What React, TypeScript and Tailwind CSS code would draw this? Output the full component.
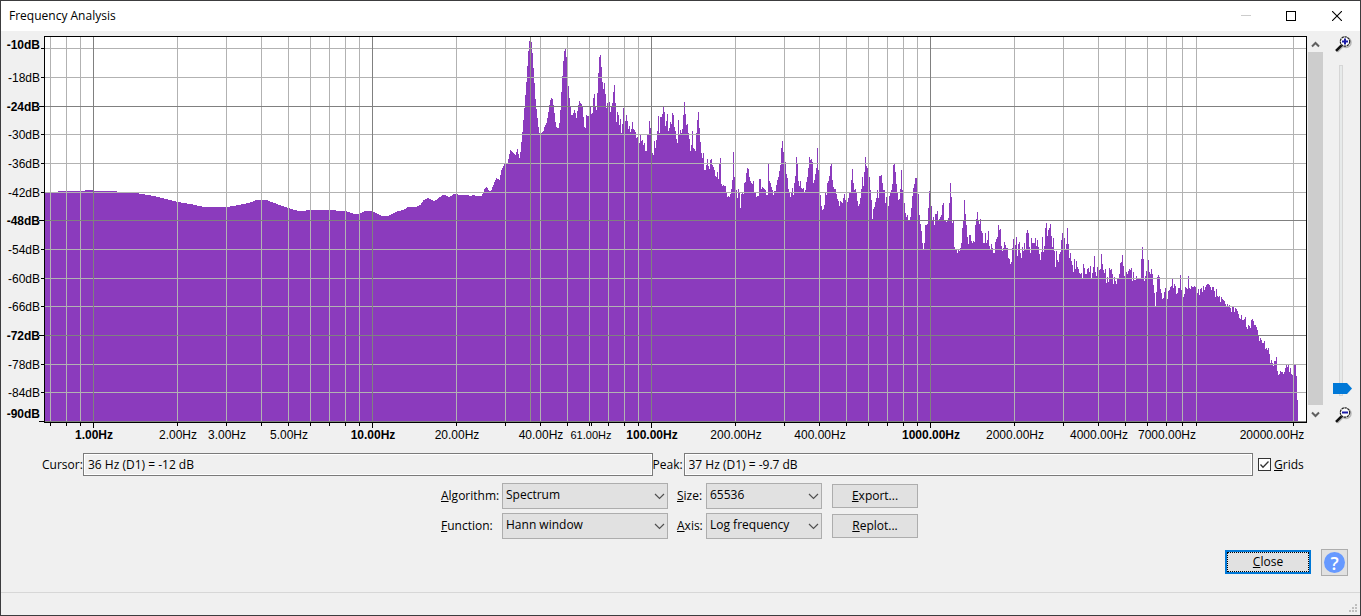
import React, { useState } from 'react';

const GRID = '#b2b2b2';
const GRID_MAJOR = '#808080';
const SPECTRUM = '#8b3bbd';

// plot frame, in chart units
const LEFT = 44;
const RIGHT = 1306;
const TOP = 36;
const BOTTOM = 422;

const dbTicks = [
  { label: '-10dB', y: 48, labelY: 49, bold: true, major: false },
  { label: '-18dB', y: 77, labelY: 82, bold: false, major: false },
  { label: '-24dB', y: 106, labelY: 111, bold: true, major: true },
  { label: '-30dB', y: 134, labelY: 139, bold: false, major: false },
  { label: '-36dB', y: 163, labelY: 168, bold: false, major: false },
  { label: '-42dB', y: 192, labelY: 197, bold: false, major: false },
  { label: '-48dB', y: 220, labelY: 225, bold: true, major: true },
  { label: '-54dB', y: 249, labelY: 254, bold: false, major: false },
  { label: '-60dB', y: 278, labelY: 283, bold: false, major: false },
  { label: '-66dB', y: 306, labelY: 311, bold: false, major: false },
  { label: '-72dB', y: 335, labelY: 340, bold: true, major: true },
  { label: '-78dB', y: 364, labelY: 369, bold: false, major: false },
  { label: '-84dB', y: 392, labelY: 397, bold: false, major: false },
  { label: '-90dB', y: 421, labelY: 418, bold: true, major: true },
];

const minorX = [
  50, 66, 80, 177, 226, 261, 288, 310, 329, 345, 359, 456, 505, 540, 567, 589, 608, 624, 638,
  735, 784, 819, 846, 868, 887, 903, 917, 1014, 1063, 1098, 1125, 1147, 1166, 1182, 1196, 1293,
];
const majorX = [93, 372, 651, 930];

const hzLabels = [
  { text: '1.00Hz', x: 94, bold: true },
  { text: '2.00Hz', x: 178 },
  { text: '3.00Hz', x: 227 },
  { text: '5.00Hz', x: 289 },
  { text: '10.00Hz', x: 373, bold: true },
  { text: '20.00Hz', x: 457 },
  { text: '40.00Hz', x: 541 },
  { text: '61.00Hz', x: 591, small: true },
  { text: '100.00Hz', x: 652, bold: true },
  { text: '200.00Hz', x: 736 },
  { text: '400.00Hz', x: 820 },
  { text: '1000.00Hz', x: 931, bold: true },
  { text: '2000.00Hz', x: 1015 },
  { text: '4000.00Hz', x: 1099 },
  { text: '7000.00Hz', x: 1167 },
  { text: '20000.00Hz', x: 1272 },
];

// low end is smooth: [x, level] knots, interpolated
const lowKnots = [
  [45, 192], [57, 192], [58, 191], [84, 191], [85, 190], [92, 190], [93, 191], [116, 191], [118, 192], [134, 192],
  [135, 193], [148, 195], [158, 197], [165, 199], [178, 202], [190, 204], [204, 207], [225, 207], [233, 206],
  [243, 204], [251, 202], [256, 200], [266, 200], [274, 203], [282, 206], [288, 208], [298, 211], [304, 211],
  [306, 210], [335, 210], [336, 211], [345, 211], [354, 214], [358, 214], [364, 211], [372, 211], [376, 213],
  [382, 216], [388, 216], [393, 213], [397, 211], [403, 210], [407, 207], [415, 207], [420, 205], [423, 200],
  [427, 198], [430, 199], [434, 201], [437, 199], [442, 195], [445, 195], [449, 197], [453, 194], [456, 194],
  [459, 195], [468, 195], [470, 196], [473, 195], [477, 196], [481, 196], [483, 192], [484, 189], [486, 187],
  [489, 191], [491, 190], [494, 182], [496, 178], [499, 180], [501, 170], [504, 164], [507, 163], [509, 154],
  [510, 150], [512, 152], [515, 155], [517, 149], [519, 158], [520, 152], [521, 142], [522, 132], [523, 120],
  [524, 108], [525, 95], [526, 82], [527, 66], [528, 51], [529, 41], [531, 42], [532, 53], [533, 68], [534, 83],
  [535, 99], [536, 109], [537, 118], [538, 127], [539, 133], [541, 133], [543, 131], [544, 127], [546, 123],
  [547, 118], [548, 112], [549, 105], [550, 100], [551, 98], [552, 99], [553, 105], [554, 113], [555, 122],
  [556, 127], [558, 128], [559, 123], [560, 110], [561, 92], [562, 76], [563, 61], [564, 51], [565, 49],
  [566, 57], [567, 73], [568, 86], [569, 98], [570, 106], [571, 115], [572, 115], [574, 110], [575, 113],
  [576, 118], [577, 111], [578, 105], [579, 101], [580, 103], [581, 104], [582, 107], [583, 117], [584, 127],
  [585, 128], [586, 115], [588, 116], [589, 107], [590, 107], [591, 114], [592, 113], [593, 98], [594, 94],
  [595, 107], [596, 110], [597, 93], [598, 73], [599, 57],
];

// from x = 600 on there is one level per column
const midLevels = [
  55, 67, 82, 89, 83, 94, 108, 103, 107, 102, 112, 107, 103, 92, 85, 103, 122, 112, 115, 125,
  119, 133, 124, 108, 121, 121, 115, 121, 129, 126, 132, 129, 122, 129, 130, 132, 138, 137, 137, 143,
  135, 141, 140, 145, 143, 151, 151, 135, 134, 121, 128, 134, 153, 155, 141, 148, 140, 131, 116, 133,
  117, 117, 114, 107, 112, 126, 121, 114, 131, 128, 122, 124, 113, 115, 127, 131, 139, 143, 120, 134,
  130, 133, 129, 115, 102, 114, 125, 124, 133, 139, 151, 145, 131, 148, 149, 151, 133, 120, 112, 128,
];

const upperLevels = [
  142, 153, 158, 153, 170, 170, 165, 159, 166, 169, 160, 159, 165, 167, 170, 176, 177, 172, 179, 163,
  158, 184, 186, 185, 186, 186, 193, 197, 196, 197, 194, 189, 180, 152, 177, 192, 190, 198, 189, 193,
  208, 194, 193, 194, 183, 182, 173, 168, 169, 177, 181, 183, 184, 181, 192, 193, 197, 196, 196, 179,
  179, 189, 187, 188, 189, 190, 195, 195, 164, 181, 183, 187, 190, 195, 191, 191, 185, 180, 177, 171,
  165, 148, 141, 152, 163, 162, 174, 178, 189, 193, 197, 193, 188, 195, 183, 176, 157, 163, 181, 186,
  181, 188, 189, 188, 192, 190, 182, 177, 168, 157, 160, 159, 162, 183, 180, 174, 168, 148, 170, 190,
  195, 206, 210, 209, 205, 193, 195, 183, 181, 176, 166, 164, 180, 187, 189, 189, 194, 199, 201, 206,
  201, 202, 203, 198, 194, 200, 200, 202, 198, 193, 193, 180, 169, 183, 190, 189, 193, 201, 206, 204,
  198, 189, 177, 186, 172, 157, 166, 168, 177, 177, 190, 200, 219, 209, 207, 202, 198, 190, 198, 176,
  176, 175, 183, 190, 190, 203, 197, 200, 206, 196, 193, 190, 184, 165, 164, 172, 184, 192, 200, 199,
  189, 170, 190, 200, 203, 213, 217, 215, 220, 220, 217, 208, 196, 188, 184, 178, 178, 190, 194, 215,
  224, 231, 243, 249, 243, 225, 225, 224, 208, 191, 200, 206, 220, 217, 225, 214, 214, 211, 220, 219,
  217, 215, 205, 203, 220, 220, 222, 220, 218, 203, 183, 197, 223, 221, 247, 249, 249, 253, 250, 251,
  248, 243, 228, 220, 200, 214, 225, 237, 244, 235, 235, 241, 243, 241, 242, 225, 219, 212, 220, 224,
];

const trebleLevels = [
  219, 231, 233, 243, 243, 233, 243, 240, 231, 246, 249, 244, 248, 253, 253, 242, 239, 237, 225, 230,
  229, 246, 251, 248, 242, 245, 248, 248, 258, 259, 264, 262, 248, 239, 245, 245, 237, 256, 244, 242,
  253, 258, 247, 251, 243, 249, 233, 230, 233, 247, 253, 238, 243, 243, 243, 238, 246, 240, 247, 254,
  260, 252, 237, 252, 246, 228, 223, 236, 230, 228, 224, 236, 247, 238, 251, 267, 251, 260, 262, 254,
  252, 240, 233, 238, 238, 249, 244, 228, 244, 258, 253, 261, 265, 272, 259, 269, 261, 267, 269, 273,
  274, 273, 278, 264, 268, 274, 274, 269, 268, 272, 266, 278, 273, 267, 256, 272, 276, 267, 270, 270,
  269, 254, 264, 270, 273, 269, 283, 277, 282, 268, 270, 269, 274, 284, 277, 281, 284, 279, 278, 274,
  263, 262, 255, 266, 276, 276, 272, 274, 271, 269, 270, 268, 281, 272, 280, 280, 276, 279, 278, 278,
  278, 259, 247, 259, 281, 276, 271, 271, 260, 272, 274, 269, 274, 285, 293, 306, 292, 277, 275, 277,
  289, 293, 299, 298, 292, 288, 292, 299, 291, 290, 287, 286, 279, 288, 284, 286, 294, 293, 288, 288,
  275, 290, 297, 297, 294, 287, 288, 289, 276, 288, 289, 286, 287, 287, 286, 287, 288, 293, 289, 295,
  289, 288, 292, 286, 290, 287, 285, 284, 284, 285, 287, 290, 287, 287, 291, 297, 289, 296, 297, 296,
  302, 297, 299, 300, 301, 304, 306, 304, 306, 305, 308, 312, 307, 307, 312, 308, 309, 311, 314, 318,
  319, 315, 320, 320, 319, 317, 327, 329, 325, 326, 328, 320, 319, 321, 325, 325, 327, 330, 336, 341,
  338, 340, 343, 343, 341, 349, 348, 350, 348, 354, 363, 360, 363, 366, 361, 361, 357, 371, 375, 374,
  371, 372, 372, 374, 372, 368, 365, 367, 365, 372, 368, 374, 375, 374, 365, 365, 376, 400,
];

function buildSpectrumPath() {
  const columns: number[][] = [];
  for (let i = 0; i < lowKnots.length - 1; i++) {
    const [x0, y0] = lowKnots[i];
    const [x1, y1] = lowKnots[i + 1];
    for (let x = x0; x < x1; x++) {
      columns.push([x, Math.round(y0 + ((y1 - y0) * (x - x0)) / (x1 - x0))]);
    }
  }
  columns.push(lowKnots[lowKnots.length - 1]);
  [...midLevels, ...upperLevels, ...trebleLevels].forEach((y, i) => {
    columns.push([600 + i, y]);
  });
  const last = columns[columns.length - 1][0];
  return `M45 ${BOTTOM}` + columns.map(([x, y]) => `L${x} ${y}H${x + 1}`).join('') + `L${last + 1} ${BOTTOM}Z`;
}

const spectrumPath = buildSpectrumPath();

const SpectrumChart: React.FC<{ grids: boolean }> = ({ grids }) => (
  <svg
    viewBox="1 31 1307 414"
    className="block w-full font-['Liberation_Sans',Arial,sans-serif] text-[12px]"
    role="img"
    aria-label="Frequency spectrum"
  >
    <g shapeRendering="crispEdges">
      <rect x={LEFT} y={TOP} width={RIGHT - LEFT + 1} height={BOTTOM - TOP + 1} fill="#000" />
      <rect x={LEFT + 1} y={TOP + 1} width={RIGHT - LEFT - 1} height={BOTTOM - TOP - 1} fill="#fff" />
      <path d={spectrumPath} fill={SPECTRUM} />
      {grids && (
        <>
          {minorX.map(x => (
            <rect key={x} x={x} y={37} width={1} height={385} fill={GRID} />
          ))}
          {dbTicks.map(t => (
            <rect key={t.label} x={45} y={t.y} width={1261} height={1} fill={t.major ? GRID_MAJOR : GRID} />
          ))}
          {majorX.map(x => (
            <rect key={x} x={x} y={37} width={1} height={385} fill={GRID_MAJOR} />
          ))}
        </>
      )}
      {/* cursor position */}
      <rect x={530} y={37} width={1} height={385} fill="#8e8e88" />
      <rect x={LEFT} y={BOTTOM} width={RIGHT - LEFT + 1} height={1} fill="#000" />
      {dbTicks.map(t => (
        <rect key={t.label} x={t.major ? 39 : 41} y={t.y} width={t.major ? 5 : 3} height={1} fill="#000" />
      ))}
      {[...minorX, 591].map(x => (
        <rect key={x} x={x} y={423} width={1} height={3} fill="#000" />
      ))}
      {majorX.map(x => (
        <rect key={x} x={x} y={423} width={1} height={5} fill="#000" />
      ))}
    </g>
    {dbTicks.map(t => (
      <text key={t.label} x={40} y={t.labelY} textAnchor="end" fontWeight={t.bold ? 700 : 400}>
        {t.label}
      </text>
    ))}
    {hzLabels.map(l => (
      <text
        key={l.text}
        x={l.x}
        y={439}
        textAnchor="middle"
        fontWeight={l.bold ? 700 : 400}
        className={l.small ? 'text-[11px]' : ''}
      >
        {l.text}
      </text>
    ))}
  </svg>
);

const Magnifier: React.FC<{ plus?: boolean }> = ({ plus }) => (
  <svg className="ml-1" width="17" height="17" viewBox="0 0 17 17" fill="none">
    <path d="M2 15.5 7 10.5" stroke="#b5b5b5" strokeWidth="3" />
    <circle cx="11" cy="6.5" r="5" stroke="#b5b5b5" strokeWidth="1.5" />
    <circle cx="10" cy="5.5" r="4.7" fill="#fff" stroke="#222" strokeWidth="1.2" strokeDasharray="2.4 0.6" />
    <path d="M1 14.8 6.5 9.3" stroke="#111" strokeWidth="2.4" />
    <path d={plus ? 'M7 5.5h6M10 2.5v6' : 'M7 5.5h6'} stroke="#1a1aa6" strokeWidth="2" />
  </svg>
);

const ScrollArrow: React.FC<{ down?: boolean }> = ({ down }) => (
  <svg width="9" height="7" viewBox="0 0 9 7" fill="none">
    <path d={down ? 'M1 1.5 4.5 5 8 1.5' : 'M1 5.5 4.5 2 8 5.5'} stroke="#606060" strokeWidth="2" />
  </svg>
);

interface DropDownProps {
  id: string;
  options: string[];
  className: string;
}

const DropDown: React.FC<DropDownProps> = ({ id, options, className }) => (
  <div className={`relative ${className}`}>
    <select
      id={id}
      className="block h-[26px] w-full appearance-none border border-[#adadad] bg-[#e1e1e1] pb-[2px] pl-[3px] pr-5 leading-4 outline-none"
    >
      {options.map(o => (
        <option key={o}>{o}</option>
      ))}
    </select>
    <svg
      className="pointer-events-none absolute right-[3px] top-[10px]"
      width="11"
      height="7"
      viewBox="0 0 11 7"
      fill="none"
    >
      <path d="M1 1 5.5 5.5 10 1" stroke="#505050" strokeWidth="1.2" />
    </svg>
  </div>
);

const buttonClass = 'h-6 w-[86px] border border-[#adadad] bg-[#e1e1e1] leading-4';
const fieldClass =
  'h-[23px] min-w-0 flex-1 border border-[#7a7a7a] bg-[#f0f0f0] px-1 pb-px outline-none shadow-[inset_0_0_0_1px_#ffffff]';

const App: React.FC = () => {
  const [grids, setGrids] = useState(true);
  const [zoom, setZoom] = useState(0);

  return (
    <div className="flex min-h-screen flex-col border border-[#3c3c3e] bg-[#f0f0f0] font-['Open_Sans','Noto_Sans',sans-serif] text-[12px] leading-4 text-black">
      {/* Title bar */}
      <header className="flex h-[30px] items-center bg-white pl-2">
        <h1 className="flex-1">Frequency Analysis</h1>
        <button type="button" aria-label="Minimize" disabled className="flex h-full w-[44px] items-center justify-center">
          <svg width="10" height="10" shapeRendering="crispEdges">
            <rect y="4" width="10" height="1" fill="#cccccc" />
          </svg>
        </button>
        <button type="button" aria-label="Maximize" className="flex h-full w-[46px] items-center justify-center">
          <svg width="10" height="10" fill="none">
            <rect x="0.5" y="0.5" width="9" height="9" stroke="#000" />
          </svg>
        </button>
        <button type="button" aria-label="Close window" className="flex h-full w-[46px] items-center justify-center">
          <svg width="10" height="10" fill="none">
            <path d="M0 0 10 10M10 0 0 10" stroke="#000" strokeWidth="1.1" />
          </svg>
        </button>
      </header>

      {/* Plot with pan and zoom controls */}
      <div className="flex">
        <div className="min-w-0 flex-1">
          <SpectrumChart grids={grids} />
        </div>
        <div className="mb-[23px] mt-[5px] flex w-[15px] flex-col">
          <button type="button" aria-label="Scroll up" className="flex h-4 items-center justify-center pt-px">
            <ScrollArrow />
          </button>
          <div className="flex-1 bg-[#cdcdcd]" />
          <button type="button" aria-label="Scroll down" className="flex h-[17px] items-center justify-center pt-[2px]">
            <ScrollArrow down />
          </button>
        </div>
        <div className="mb-[21px] mt-[5px] flex w-[37px] flex-col items-center">
          <Magnifier plus />
          <div className="relative mb-[11px] mt-3 flex w-5 flex-1 flex-col pl-[7px]">
            <div className="w-1 flex-1 border border-[#d6d6d6] bg-[#e7eaea]" />
            <svg className="absolute bottom-[2px] left-0" width="20" height="11">
              <path d="M1 0H15L20 5.5 15 11H1Z" fill="#0078d7" />
            </svg>
            <input
              type="range"
              aria-label="Vertical zoom"
              min={0}
              max={100}
              value={zoom}
              onChange={e => setZoom(Number(e.target.value))}
              className="absolute inset-0 h-full w-full opacity-0 [direction:rtl] [writing-mode:vertical-lr]"
            />
          </div>
          <Magnifier />
        </div>
      </div>

      {/* Readouts */}
      <div className="mt-2 flex items-center pl-[41px]">
        <label htmlFor="cursor" className="w-[41px] whitespace-nowrap">
          Cursor:
        </label>
        <input id="cursor" readOnly value="36 Hz (D1) = -12 dB" className={fieldClass} />
        <label htmlFor="peak" className="w-[31px] whitespace-nowrap">
          Peak:
        </label>
        <input id="peak" readOnly value="37 Hz (D1) = -9.7 dB" className={fieldClass} />
        <div className="flex w-[107px] items-center pl-[5px]">
          <span className="relative flex">
            <input
              id="grids"
              type="checkbox"
              checked={grids}
              onChange={e => setGrids(e.target.checked)}
              className="h-[13px] w-[13px] appearance-none border border-[#333333] bg-white"
            />
            {grids && (
              <svg className="pointer-events-none absolute inset-0" width="13" height="13" fill="none">
                <path d="M2.5 6.5 5 9.2 10.5 3.5" stroke="#333" strokeWidth="1.3" />
              </svg>
            )}
          </span>
          <label htmlFor="grids" className="pl-[3px]">
            <u>G</u>rids
          </label>
        </div>
      </div>

      {/* Analysis settings */}
      <div className="mt-[7px] grid grid-cols-[61px_175px_29px_126px_86px] items-center justify-center gap-y-1 pr-[2px]">
        <label htmlFor="algorithm">
          <u>A</u>lgorithm:
        </label>
        <DropDown
          id="algorithm"
          className="w-[166px]"
          options={['Spectrum', 'Standard Autocorrelation', 'Cuberoot Autocorrelation', 'Enhanced Autocorrelation', 'Cepstrum']}
        />
        <label htmlFor="size">
          <u>S</u>ize:
        </label>
        <DropDown id="size" className="w-[116px]" options={['65536', '32768', '16384', '8192', '4096', '2048', '1024']} />
        <button type="button" className={buttonClass}>
          <u>E</u>xport...
        </button>

        <label htmlFor="function">
          <u>F</u>unction:
        </label>
        <DropDown
          id="function"
          className="w-[166px]"
          options={['Hann window', 'Hamming window', 'Blackman window', 'Bartlett window', 'Rectangular window']}
        />
        <label htmlFor="axis">
          <u>A</u>xis:
        </label>
        <DropDown id="axis" className="w-[116px]" options={['Log frequency', 'Linear frequency']} />
        <button type="button" className={buttonClass}>
          <u>R</u>eplot...
        </button>
      </div>

      {/* Dialog buttons */}
      <div className="mt-[10px] flex items-start justify-end gap-[10px] pr-3">
        <button type="button" className="mt-px h-6 w-[86px] border-2 border-[#0078d7] bg-[#e1e1e1]">
          <span className="flex h-full items-center justify-center border border-dotted border-black">
            <span>
              <u>C</u>lose
            </span>
          </span>
        </button>
        <button
          type="button"
          aria-label="Help"
          className="flex h-[27px] w-[27px] items-center justify-center border border-[#adadad] bg-[#e1e1e1]"
        >
          <span className="flex h-[21px] w-[21px] items-center justify-center rounded-full bg-[#6699ff] text-[18px] font-semibold leading-5 text-white">
            ?
          </span>
        </button>
      </div>

      {/* Status bar */}
      <footer className="mt-4 flex flex-1 items-end justify-end border-t border-[#d7d7d7] pb-[2px] pr-[2px]">
        <svg width="9" height="9" fill="#bfbfbf" shapeRendering="crispEdges">
          <path d="M6 0h2v2h-2zM3 3h2v2h-2zM6 3h2v2h-2zM0 6h2v2h-2zM3 6h2v2h-2zM6 6h2v2h-2z" />
        </svg>
      </footer>
    </div>
  );
};

export default App;
